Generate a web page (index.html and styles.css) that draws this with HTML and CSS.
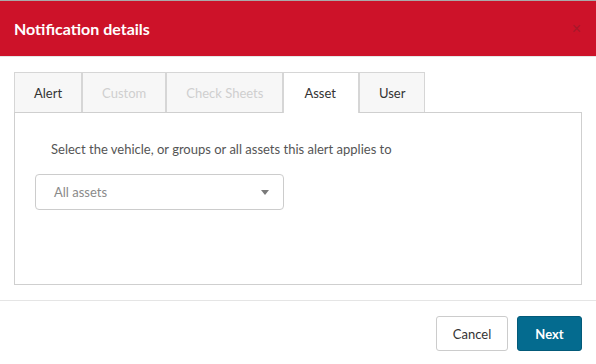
FILE: index.html
```html
<!DOCTYPE html>
<html lang="en">
<head>
    <meta charset="UTF-8">
    <meta name="viewport" content="width=device-width, initial-scale=1.0">
    <title>Notification details</title>
    <link rel="stylesheet" href="styles.css">
</head>
<body>
    <div class="modal">
        <div class="modal-header">
            <h4 class="modal-title">Notification details</h4>
            <button class="close" aria-label="Close">&times;</button>
        </div>
        <div class="modal-body">
            <ul class="tabs">
                <li class="tab">Alert</li>
                <li class="tab disabled">Custom</li>
                <li class="tab disabled">Check Sheets</li>
                <li class="tab active">Asset</li>
                <li class="tab">User</li>
            </ul>
            <div class="tab-panel">
                <p class="hint">Select the vehicle, or groups or all assets this alert applies to</p>
                <div class="select">
                    <span class="select-value">All assets</span>
                    <span class="caret"></span>
                </div>
            </div>
        </div>
        <div class="modal-footer">
            <button class="btn btn-default">Cancel</button>
            <button class="btn btn-primary">Next</button>
        </div>
    </div>
</body>
</html>
```

FILE: styles.css
```css
* {
    box-sizing: border-box;
}
body {
    margin: 0;
    font-family: Lato, 'Open Sans', sans-serif;
    background: #fff;
    color: #333;
}
.modal-header {
    height: 57px;
    border-top: 1px solid #a9a9a9;
    border-bottom: 1px solid #e5e5e5;
    background: #cd1229;
    padding: 0 14px;
    display: flex;
    align-items: center;
    justify-content: space-between;
}
.modal-title {
    margin: 0;
    color: #fff;
    font-size: 16px;
    font-weight: 700;
}
.close {
    border: none;
    background: none;
    padding: 0;
    color: #9e1a2a;
    font-size: 16px;
    line-height: 1;
    margin-right: 1px;
    opacity: 0.8;
}
.modal-body {
    padding: 15px 14px;
}
.tabs {
    list-style: none;
    margin: 0;
    padding: 0;
    display: flex;
}
.tab {
    height: 40px;
    padding: 0 19px;
    display: flex;
    align-items: center;
    font-size: 13px;
    color: #333;
    background: #f7f7f7;
    border: 1px solid #d6d6d6;
    border-bottom: none;
}
.tab.disabled {
    color: #cfcfcf;
}
.tab.active {
    background: #fff;
    position: relative;
    z-index: 1;
    height: 41px;
    margin-bottom: -1px;
    padding: 0 22px 0 20px;
}
.tab-panel {
    border: 1px solid #cfcfcf;
    height: 173px;
    padding: 28px 20px 0;
}
.hint {
    margin: 0 0 17px 16px;
    font-size: 13px;
    line-height: 16px;
    color: #555;
}
.select {
    width: 249px;
    height: 36px;
    border: 1px solid #cccccc;
    border-radius: 4px;
    padding: 0 14px 0 18px;
    display: flex;
    align-items: center;
    justify-content: space-between;
}
.select-value {
    font-size: 13px;
    color: #8a8a8a;
}
.caret {
    width: 0;
    height: 0;
    border-left: 4px solid transparent;
    border-right: 4px solid transparent;
    border-top: 5px solid #7a7a7a;
}
.modal-footer {
    border-top: 1px solid #e5e5e5;
    padding: 15px 14px;
    display: flex;
    justify-content: flex-end;
    gap: 9px;
}
.btn {
    height: 35px;
    border-radius: 3px;
    font-family: inherit;
    font-size: 13px;
    padding: 0;
    cursor: pointer;
}
.btn-default {
    width: 72px;
    background: #fff;
    border: 1px solid #cccccc;
    color: #333;
}
.btn-primary {
    width: 65px;
    background: #046b8f;
    border: 1px solid #035a79;
    color: #fff;
    font-weight: 700;
}
```
